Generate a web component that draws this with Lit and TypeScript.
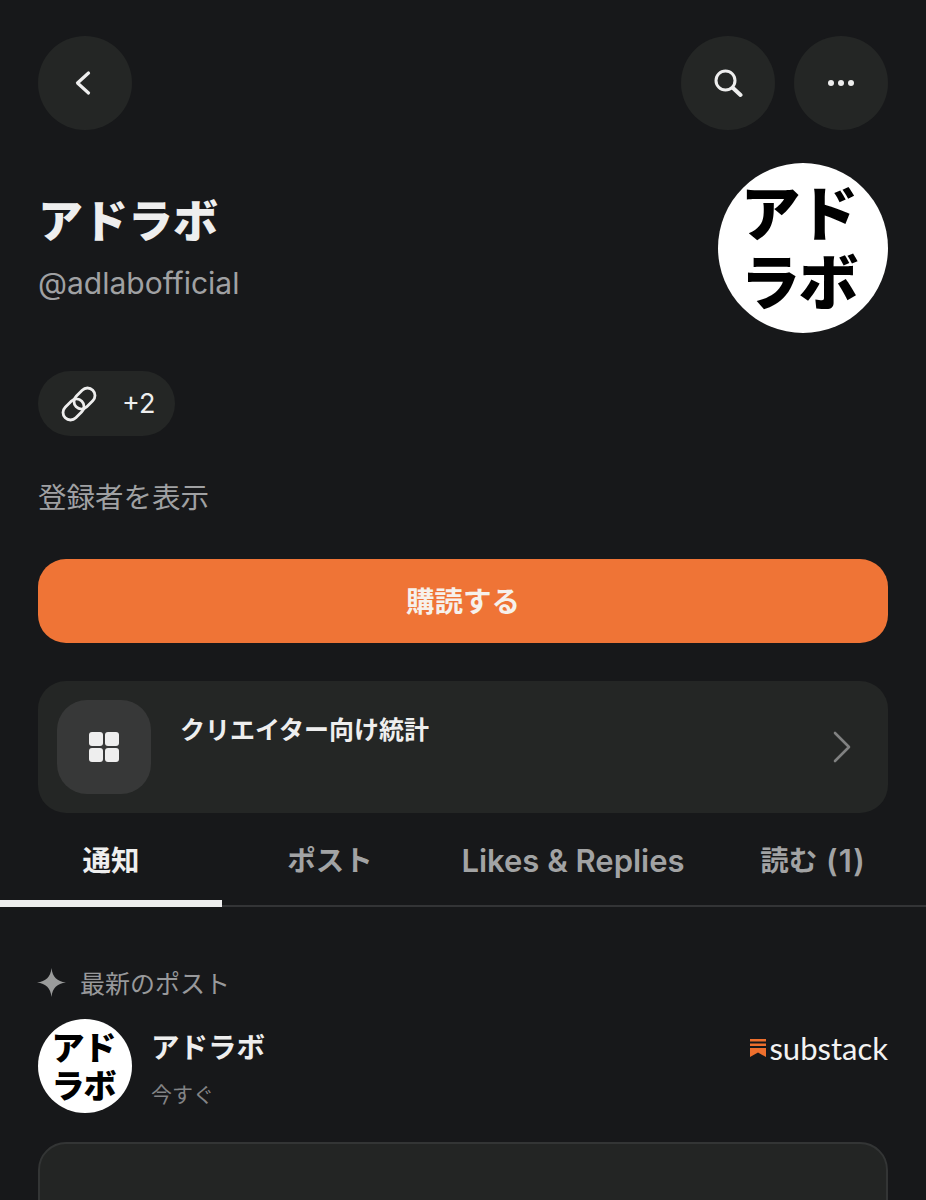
import { LitElement, html, css } from "lit";
import { customElement } from "lit/decorators.js";

@customElement("app-root")
export class AppRoot extends LitElement {
  static styles = css`
    :host {
      display: block;
      height: 1200px;
      overflow: hidden;
      background: #17181a;
      font-family: Inter, "Noto Sans CJK JP", sans-serif;
      color: #eeeeee;
    }
    .top {
      display: flex;
      align-items: center;
      gap: 19px;
      padding: 36px 38px 0;
    }
    .spacer { flex: 1; }
    .round {
      width: 94px;
      height: 94px;
      border-radius: 50%;
      background: #242625;
      display: flex;
      align-items: center;
      justify-content: center;
    }
    .back { margin-right: 4px; }
    .head {
      display: flex;
      justify-content: space-between;
      padding: 33px 38px 0;
    }
    .title {
      font-size: 45px;
      line-height: 60px;
      font-weight: 900;
      margin-top: 29px;
      color: #eeeeee;
    }
    .handle {
      font-size: 30px;
      line-height: 36px;
      color: #a0a1a3;
      margin-top: 13px;
    }
    .logo {
      width: 170px;
      height: 170px;
      border-radius: 50%;
      background: #fff;
      color: #000;
      display: grid;
      grid-template-columns: 56px 56px;
      grid-auto-rows: 69px;
      justify-content: center;
      align-content: center;
      column-gap: 2px;
      box-sizing: border-box;
      padding: 2px 11px 0 0;
      font-weight: 900;
      font-size: 60px;
      line-height: 69px;
      text-align: center;
    }
    .logo.small {
      width: 94px;
      height: 94px;
      grid-template-columns: 31px 31px;
      grid-auto-rows: 38px;
      column-gap: 1px;
      padding: 1px 4px 0 0;
      font-size: 33px;
      line-height: 38px;
      flex: none;
    }
    .pill {
      margin: 38px 0 0 38px;
      width: 137px;
      height: 65px;
      border-radius: 33px;
      background: #242625;
      display: flex;
      align-items: center;
      box-sizing: border-box;
      padding-left: 23px;
      gap: 25px;
      font-size: 27px;
    }
    .subs {
      margin: 44px 38px 0;
      font-size: 28.5px;
      line-height: 36px;
      color: #a0a1a3;
    }
    .cta {
      margin: 43px 38px 0;
      height: 84px;
      box-sizing: border-box;
      padding-bottom: 3px;
      border-radius: 28px;
      background: #ef7436;
      display: flex;
      align-items: center;
      justify-content: center;
      font-size: 28.5px;
      font-weight: 700;
      color: #f6f1ec;
    }
    .stats {
      margin: 38px 38px 0;
      height: 132px;
      border-radius: 28px;
      background: #242625;
      display: flex;
      box-sizing: border-box;
      padding: 19px 36px 19px 19px;
      gap: 29px;
    }
    .stats-icon {
      width: 94px;
      height: 94px;
      border-radius: 30px;
      background: #373838;
      display: flex;
      align-items: center;
      justify-content: center;
      flex: none;
    }
    .stats-label {
      flex: 1;
      font-size: 25px;
      line-height: 34px;
      font-weight: 600;
      margin-top: 13px;
      color: #eeeeee;
    }
    .stats-chev { align-self: center; display: flex; }
    .tabs {
      display: grid;
      grid-template-columns: 222px 216px 270px 210px;
      height: 94px;
      box-sizing: border-box;
      border-bottom: 2px solid #333436;
      font-size: 28.5px;
      font-weight: 600;
      color: #a2a3a4;
    }
    .tab {
      display: flex;
      justify-content: center;
      padding-top: 28px;
      line-height: 40px;
      white-space: pre;
    }
    .tab.on {
      color: #eeeeee;
      box-shadow: 0 2px 0 #eeeeee, inset 0 -5px 0 #eeeeee;
    }
    .lat { font-size: 31px; }
    .count { letter-spacing: 1px; }
    .latest {
      display: flex;
      align-items: center;
      gap: 14px;
      margin: 59px 38px 0 37px;
      height: 32px;
      font-size: 25px;
      color: #98999b;
    }
    .author {
      display: flex;
      gap: 19px;
      margin: 21px 38px 0;
    }
    .who { flex: 1; }
    .name {
      font-size: 28.5px;
      line-height: 40px;
      font-weight: 700;
      margin-top: 9px;
    }
    .time {
      font-size: 21px;
      line-height: 28px;
      color: #838486;
      margin-top: 13px;
    }
    .brand {
      display: flex;
      align-items: center;
      gap: 3px;
      height: 40px;
      margin-top: 9px;
      font-family: Lato, sans-serif;
      font-size: 31px;
      color: #f2f2f2;
    }
    .post {
      margin: 29px 38px 0;
      height: 200px;
      box-sizing: border-box;
      border: 2px solid #333535;
      border-radius: 28px;
      background: #232524;
    }
  `;

  private logo(small = false) {
    return html`<div class="logo ${small ? "small" : ""}">
      <span>ア</span><span>ド</span><span>ラ</span><span>ボ</span>
    </div>`;
  }

  render() {
    return html`
      <div class="top">
        <div class="round">
          <svg class="back" width="20" height="26" viewBox="0 0 20 26" fill="none" stroke="#eeeeee" stroke-width="3.2" stroke-linecap="round" stroke-linejoin="round"><path d="M15.5 3 4.500 13l11 10"/></svg>
        </div>
        <div class="spacer"></div>
        <div class="round">
          <svg width="30" height="30" viewBox="0 0 30 30" fill="none" stroke="#eeeeee" stroke-linecap="round"><circle cx="12.500" cy="12.500" r="9.500" stroke-width="3"/><path d="m20 20 7.500 7" stroke-width="4"/></svg>
        </div>
        <div class="round">
          <svg width="28" height="8" viewBox="0 0 28 8" fill="#eeeeee"><circle cx="4" cy="4" r="3"/><circle cx="14" cy="4" r="3"/><circle cx="24" cy="4" r="3"/></svg>
        </div>
      </div>
      <div class="head">
        <div>
          <div class="title">アドラボ</div>
          <div class="handle">@adlabofficial</div>
        </div>
        ${this.logo()}
      </div>
      <div class="pill">
        <svg width="36" height="36" viewBox="0 0 36 36" fill="none" stroke="#eeeeee" stroke-width="2.800" stroke-linecap="round">
          <g transform="rotate(-45 18 18)">
            <rect x="-1.500" y="10.500" width="23.500" height="15" rx="7.500"/>
            <rect x="14" y="10.500" width="23.500" height="15" rx="7.500"/>
          </g>
        </svg>
        <span>+2</span>
      </div>
      <div class="subs">登録者を表示</div>
      <div class="cta">購読する</div>
      <div class="stats">
        <div class="stats-icon">
          <svg width="30" height="30" viewBox="0 0 30 30" fill="#eeeeee"><rect width="14" height="14" rx="3"/><rect x="16" width="14" height="14" rx="3"/><rect y="16" width="14" height="14" rx="3"/><rect x="16" y="16" width="14" height="14" rx="3"/></svg>
        </div>
        <div class="stats-label">クリエイター向け統計</div>
        <div class="stats-chev">
          <svg width="20" height="32" viewBox="0 0 20 32" fill="none" stroke="#808181" stroke-width="2.6" stroke-linecap="round" stroke-linejoin="round"><path d="m3 2 14 14L3 30"/></svg>
        </div>
      </div>
      <div class="tabs">
        <div class="tab on">通知</div>
        <div class="tab">ポスト</div>
        <div class="tab lat">Likes &amp; Replies</div>
        <div class="tab">読む<span class="lat count"> (1)</span></div>
      </div>
      <div class="latest">
        <svg width="29" height="29" viewBox="0 0 29 29" fill="#9a9b9b"><path d="M14.500 0C15.500 9 20 13.500 29 14.500 20 15.500 15.500 20 14.500 29 13.500 20 9 15.500 0 14.500 9 13.500 13.500 9 14.500 0Z"/></svg>
        <span>最新のポスト</span>
      </div>
      <div class="author">
        ${this.logo(true)}
        <div class="who">
          <div class="name">アドラボ</div>
          <div class="time">今すぐ</div>
        </div>
        <div class="brand">
          <svg width="16" height="18" viewBox="0 0 16 18" fill="#ee6f2d"><rect width="16" height="2.500"/><rect y="4.500" width="16" height="2.500"/><path d="M0 9h16v9l-8-4.500L0 18Z"/></svg>
          <span>substack</span>
        </div>
      </div>
      <div class="post"></div>
    `;
  }
}
